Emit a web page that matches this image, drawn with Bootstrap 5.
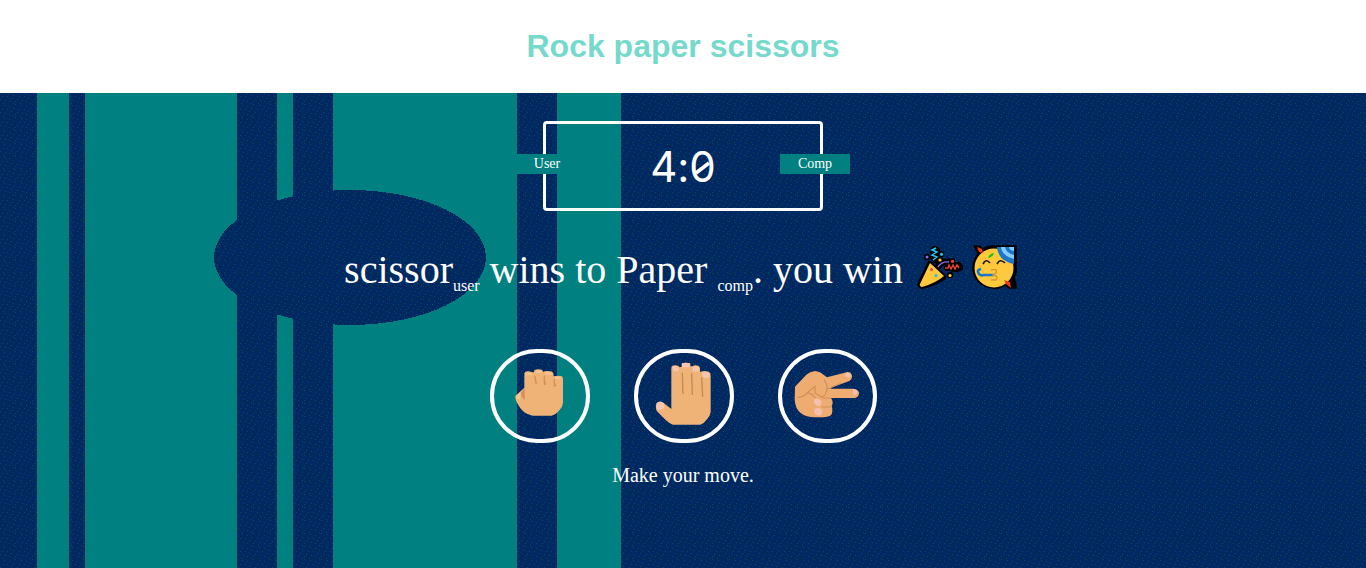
<!DOCTYPE html>
<html lang="en">
<head>
<meta charset="utf-8">
<meta name="viewport" content="width=device-width, initial-scale=1">
<title>Rock paper scissors</title>
<link href="https://cdn.jsdelivr.net/npm/bootstrap@5.3.0/dist/css/bootstrap.min.css" rel="stylesheet">
<style>
body{font-family:"Liberation Serif",serif;background:#fff;color:#fff;height:568px;overflow:hidden}
.page-head{height:93px;padding-bottom:2px}
.page-head h1{font:bold 32px/36px "Liberation Sans",sans-serif;color:#75d9cc}
.board{height:475px;background:#002b5e;padding-top:28px}
.backdrop{left:0;top:0;z-index:0}
.score-box{width:280px;height:90px;border:3px solid #fff;border-radius:4px;z-index:1}
.score{font:400 42px/60px Inter,sans-serif;font-feature-settings:"calt" 0;white-space:nowrap;padding-top:2px}
.slash{right:3px;top:22px}
.side-label{width:70px;height:20px;background:#008080;font-size:14px;line-height:19px;text-align:center;top:30px}
.side-user{left:-34px}
.side-comp{right:-30px}
.result{font-size:40px;line-height:46px;height:46px;margin-top:36px;z-index:1;white-space:nowrap}
.who{font-size:16px;line-height:0;vertical-align:-8px}
.result svg{vertical-align:top;margin-top:-3px}
.popper{margin-left:-3px}
.choices{margin-top:56px;gap:44px;z-index:1}
.choice{width:100px;height:94px;border:4px solid #fff;border-radius:50px;background:none;padding:0}
.choice:last-child{width:99px}
.choice svg{display:block;margin:-4px}
.hint{font-size:20px;line-height:24px;margin-top:20px;z-index:1}
</style>
</head>
<body>
<header class="page-head d-flex align-items-center justify-content-center"><h1 class="m-0">Rock paper scissors</h1></header>
<main class="board position-relative d-flex flex-column align-items-center">
<svg class="backdrop position-absolute" width="1366" height="475" viewBox="0 93 1366 475" shape-rendering="crispEdges" aria-hidden="true">
<defs>
<pattern id="weave" width="2" height="2" patternUnits="userSpaceOnUse"><rect width="2" height="2" fill="#00866b"/><path fill="#007a95" d="M1 0h1v1H1zM0 1h1v1H0z"/></pattern>
<pattern id="weaveAlt" width="2" height="2" patternUnits="userSpaceOnUse"><rect width="2" height="2" fill="#00866b"/><path fill="#007a95" d="M0 0h1v1H0zM1 1h1v1H1z"/></pattern>
<pattern id="speckle" width="17" height="13" patternUnits="userSpaceOnUse">
<rect width="17" height="13" fill="#002864"/>
<path fill="#002b45" d="M2 0h1v1H2zM6 1h1v1H6zM11 0h1v1h-1zM14 2h1v1h-1zM0 3h1v1H0zM4 3h1v1H4zM9 4h1v1H9zM12 5h1v1h-1zM2 6h1v1H2zM6 7h1v1H6zM15 7h1v1h-1zM10 8h1v1h-1zM0 9h1v1H0zM4 10h1v1H4zM13 10h1v1h-1zM8 11h1v1H8zM16 12h1v1h-1zM2 12h1v1H2z"/>
<path fill="#005055" d="M4 1h1v1H4zM9 2h1v1H9zM15 0h1v1h-1zM2 5h1v1H2zM7 5h1v1H7zM13 4h1v1h-1zM0 8h1v1H0zM5 9h1v1H5zM11 7h1v1h-1zM15 10h1v1h-1zM9 10h1v1H9zM3 12h1v1H3zM13 12h1v1h-1z"/>
</pattern>
</defs>
<rect y="93" width="1366" height="475" fill="url(#speckle)"/>
<path fill="url(#weave)" d="M37 93h32v475H37zM85 93h152v475H85zM277 93h16v475h-16zM333 93h184v475H333zM557 93h64v475h-64z"/>
<g fill="none" stroke="url(#weaveAlt)">
<path stroke-width="32" stroke-dasharray="1 9 2 2 1 14 4 2 1 12 1 8 1 3 2 17 1 6 1 4 3 11 1 2 2 19" d="M53 93v475"/>
<path stroke-width="152" stroke-dasharray="1 3 1 6 2 3 1 19 1 3 2 2 1 3 2 7 1 3 1 14 2 19 3 3 1 5 1 10 2 3 1 3 2 3 1 2 1 6 1 9 1 14 2 2 1 5 1 9 1 3 2 2 3 2 4 2 5 2 3 3 3 2 1 4 1 9 1 4 1 11 1 3 1 9 1 28 1 7 2 15 1 6 1 19 2 3 1 20" d="M161 93v475"/>
<path stroke-width="16" stroke-dasharray="1 8 1 16 2 3 1 28 1 11 1 19" d="M285 93v475"/>
<path stroke-width="184" stroke-dasharray="1 7 1 6 1 17 2 2 1 3 1 2 3 2 4 2 2 3 1 5 2 2 4 3 3 2 1 14 1 8 1 17 1 5 2 11 1 3 1 12 2 8 1 3 1 14 1 3 2 3 1 3 2 9 1 3 3 2 4 2 3 2 1 19 2 3 1 23 1 8 1 16 1 15 1 18 2 2 1 3 4 2 5 3 1 2 3 11 1 8 1 3 1 12 2 2 3 2 4 3 1 20" d="M425 93v475"/>
<path stroke-width="64" stroke-dasharray="1 10 1 3 2 13 1 3 1 26 1 5 2 13 1 3 1 9 1 20 2 3 1 12" d="M589 93v475"/>
</g>
<ellipse cx="350" cy="257.5" rx="136" ry="67.5" fill="url(#speckle)"/>
</svg>
<div class="score-box position-relative d-flex align-items-center justify-content-center">
<span class="side-label side-user position-absolute">User</span>
<span class="score position-relative">4:0<svg class="slash position-absolute" width="20" height="20" viewBox="0 0 20 20" aria-hidden="true"><path d="M3 16L16 6" stroke="#fff" stroke-width="3.6"/></svg></span>
<span class="side-label side-comp position-absolute">Comp</span>
</div>
<div class="result position-relative">scissor<span class="who">user</span> wins to Paper <span class="who">comp</span>. you win
<svg class="popper" width="55" height="48" viewBox="910 245 55 48" aria-label="party popper">
<g stroke="#000" stroke-width="6.2" stroke-linejoin="round" stroke-linecap="round" fill="none"><path d="M930 265L943 278Q935 284 922 287Q920 286 921 284Z" fill="#000"/><path d="M934 250l3 1-4 3 4 2-4 3 4 3M947 269l3 0 1-3 2 4 2-4 2 4 2-4 1 3M938 268q5-7 12-5M927 258h.1M941 255h.1M940 261h.1M952 262h.1M950 276h.1"/></g>
<path d="M930 264L944 277Q936 284 922 288Q919 287 920 285Z" fill="#ffc83d"/><g fill="none" stroke-width="1.4"><path stroke="#20cfff" d="M936 249l-4 2 5 2-5 3 5 2-4 3"/><path stroke="#f04438" d="M945 269h3l1-3 2 4 2-4 2 4 2-4 2 3"/><path stroke="#886ce4" d="M938 268q4-6 11-5"/></g>
<circle cx="927" cy="258" r="1.5" fill="#886ce4"/><circle cx="941.5" cy="255.3" r="1.6" fill="#20bde8"/><circle cx="940" cy="261" r="1.6" fill="#ffc83d"/><circle cx="952.5" cy="262.3" r="1.6" fill="#f04438"/><circle cx="950" cy="276.5" r="1.6" fill="#ffc83d"/><circle cx="931.5" cy="270.5" r="1.5" fill="#f04438"/><circle cx="936" cy="276.5" r="1.5" fill="#20bde8"/>
</svg><svg width="57" height="48" viewBox="966 245 57 48" aria-label="partying face">
<path d="M975 247h6l3 3q4-3 11-3h22v22q1 5-2 9l2 9v2h-7l-4-3q-5 4-12 3-18-2-20-19 0-9 5-15z" fill="#000" stroke="#000" stroke-linejoin="round" stroke-width="1.5"/>
<circle cx="995" cy="269" r="19.5" fill="#ffc83d"/><path d="M998 248h17v17q-16-3-17-17z" fill="#1976c8"/><path d="M1002 248q1 9 13 12v-4q-8-2-9-8zM1010 248q0 3 5 4v-4z" fill="#83cbff"/><path d="M978 248l5 2 1 4-4-1zM1005 281l6 2 1 6-5-4z" fill="#f03a17"/><path d="M989 259q2-5 6-5-1 4-6 5" fill="#16c60c"/><path d="M984 265q3-6 7-1M998 265q3-6 8-1" fill="none" stroke="#231b16" stroke-width="1.7"/><path d="M982 270q-5 1-2 5 2 2 5 1h10" fill="none" stroke="#1778cb" stroke-width="2.7"/><path d="M992 271q7-2 5 3l-3 2q6 1 3 5h-5" fill="none" stroke="#cf9330" stroke-width="1.3"/>
</svg></div>
<div class="choices position-relative d-flex">
<button class="choice" aria-label="Rock"><svg width="100" height="94" viewBox="30 27 300 282"><path fill="#efb377" d="M133 100q2-8 14-6l11 3q5 1 5-6 9-6 24-1l2 6q6-4 15-3 14 0 16 7l1 9q14-4 25 0 4 4 3 14v66q-1 12-12 23-10 12-22 15h-57q-31-6-45-35-8-15-7-24l27-25z"/><path fill="#d58f5d" d="M134 145v35q-12-10-11-22zM162 106l4 25h6q-4-9-5-23zM191 107v27q8 4 8-4-5-3-4-23zM221 115v25l9-3q-7-6-5-21z"/><path fill="#f7c391" d="M136 102q10-8 21 0l-2 4-18-2zM167 93q10-6 20 1l-2 5-18-1zM195 98q10-5 21 2l-2 5-19-2zM224 111q12-4 20 3l-3 4-17-2zM108 167l15-12-3 22-11 0z"/></svg></button>
<button class="choice" aria-label="Paper"><svg width="100" height="94" viewBox="27 27 300 282"><path fill="#efb377" d="M139 83q1-8 13-7 9 0 12 6l6-2v-10q12-3 26 0v9h6q8-6 19-1 5 4 4 18 11-6 26-1 7 3 6 12v110q-2 11-11 21-8 12-20 16h-82q-11-3-21-13l-27-27q-6-8-1-24 13-9 22 0l22 17z"/><path d="M172 98l2 64M200 100l2 65M230 112l3 59" fill="none" stroke="#c18c4e" stroke-width="4"/><path fill="#f6c5b0" d="M142 82q9-9 20 3l-3 9-13-1zM171 70q13-4 24 1v11h-24zM202 82q9-9 22 1l-2 11q-11 4-19-2zM231 99q12-8 24 2l-2 11q-11 5-20-2zM95 189q10-10 22 1l1 15-16 6q-11-5-7-22z"/></svg></button>
<button class="choice" aria-label="Scissors"><svg width="99" height="94" viewBox="24 27 297 282"><path fill="#efac70" d="M75 140l34-36q10-9 27-11l14 4 21 15 62-16q11 1 13 11 1 10-8 16l-55 20v3h68q17 3 16 15-1 10-13 13h-71q9 13 2 24 5 14-1 26-8 9-46 8-28 1-46-13-16-13-18-39z"/><path d="M82 172q19 0 31-15l22-18v20l21 13q17-9 15-36l-9-18M113 158q16 5 23 16M171 145h11M157 174h24M155 201h27M181 143l32-13" fill="none" stroke="#cf905a" stroke-width="3.5"/><path fill="#f5c0ad" d="M132 178q12-5 22 5 2 14-8 16-16-2-14-21zM133 207q14-7 24 3 1 16-10 17-17-1-14-20zM226 99q14-4 17 8l-5 6-11-3zM249 148q12-1 14 9l-5 9-9-2z"/></svg></button>
</div>
<p class="hint position-relative mb-0">Make your move.</p>
</main>
<script src="https://cdn.jsdelivr.net/npm/bootstrap@5.3.0/dist/js/bootstrap.bundle.min.js"></script>
</body>
</html>
